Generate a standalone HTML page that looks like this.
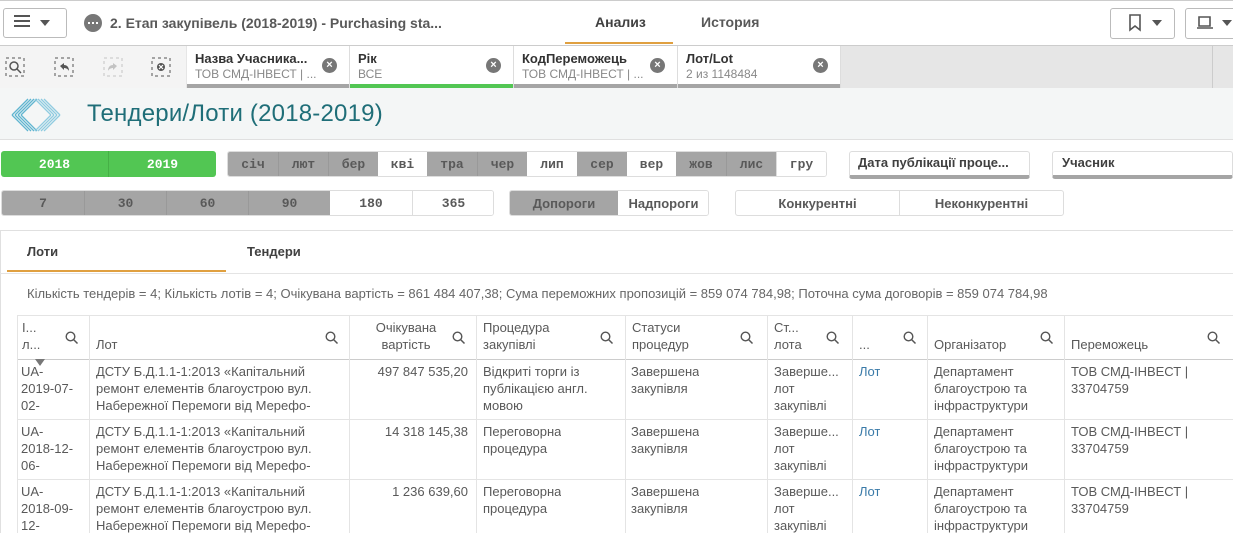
<!DOCTYPE html>
<html><head><meta charset="utf-8"><style>
*{box-sizing:border-box;margin:0;padding:0}
body{width:1233px;height:533px;overflow:hidden;background:#fff;font-family:"Liberation Sans","DejaVu Sans",sans-serif;color:#404040;position:relative}
.a{position:absolute}
.b{font-weight:bold}
.cell{position:absolute;display:flex;align-items:center;justify-content:center;font-size:13px;font-weight:bold;color:#595959;font-family:"Liberation Mono","DejaVu Sans Mono",monospace}
.g{background:#a5a5a5;color:#595959}
.w{background:#fff}
.sel{position:absolute;top:46px;height:42px;background:#fff;border-right:1px solid #ddd}
.sel .t{position:absolute;left:8px;top:5px;font-size:13px;font-weight:bold;color:#333}
.sel .s{position:absolute;left:8px;top:21px;font-size:12px;color:#888}
.sel .x{position:absolute;right:12px;top:12px;width:15px;height:15px;border-radius:50%;background:#777;color:#fff;font-size:11px;line-height:15px;text-align:center;font-weight:bold}
.sel .bar{position:absolute;left:0;right:0;bottom:0;height:4px;background:#a5a5a5}
.th{position:absolute;top:315px;height:44px;font-size:13px;color:#595959;line-height:17px;border-right:1px solid #e4e4e4}
.td{position:absolute;font-size:13px;color:#595959;line-height:17px;overflow:hidden}
.q{position:absolute;width:14px;height:14px}
.hl{position:absolute;left:17px;right:0;height:1px;background:#e4e4e4}
</style></head><body>
<!-- top bar -->
<div class="a" style="left:0;top:0;width:1233px;height:1px;background:#ccc"></div>
<div class="a" style="left:3px;top:8px;width:64px;height:30px;border:1px solid #bbb;border-radius:3px"></div>
<div class="a" style="left:14px;top:15px;width:16px;height:2px;background:#555;box-shadow:0 5px 0 #555,0 10px 0 #555"></div>
<div class="a" style="left:40px;top:20px;border-left:5px solid transparent;border-right:5px solid transparent;border-top:6px solid #555"></div>
<div class="a" style="left:84px;top:14px;width:18px;height:18px;border-radius:50%;background:#777"></div>
<div class="a" style="left:88px;top:22px;width:2px;height:2px;background:#fff;box-shadow:4px 0 0 #fff,8px 0 0 #fff"></div>
<div class="a b" style="left:110px;top:15px;font-size:14px;color:#595959">2. Етап закупівель (2018-2019) - Purchasing sta...</div>
<div class="a b" style="left:595px;top:14px;font-size:14px;color:#404040">Анализ</div>
<div class="a" style="left:565px;top:42px;width:108px;height:2px;background:#e0a040"></div>
<div class="a b" style="left:701px;top:14px;font-size:14px;color:#595959">История</div>
<div class="a" style="left:1110px;top:8px;width:65px;height:31px;border:1px solid #bbb;border-radius:3px"></div>
<svg class="a" style="left:1128px;top:14px" width="14" height="18"><path d="M2 1h10v15l-5-4-5 4z" fill="none" stroke="#555" stroke-width="1.6"/></svg>
<div class="a" style="left:1152px;top:20px;border-left:5px solid transparent;border-right:5px solid transparent;border-top:6px solid #555"></div>
<div class="a" style="left:1185px;top:8px;width:60px;height:31px;border:1px solid #bbb;border-radius:3px"></div>
<svg class="a" style="left:1196px;top:15px" width="18" height="16"><path d="M3 2h11v9H3z M1 13h16" fill="none" stroke="#555" stroke-width="1.6"/></svg>
<div class="a" style="left:1222px;top:20px;border-left:5px solid transparent;border-right:5px solid transparent;border-top:6px solid #555"></div>
<div class="a" style="left:0;top:45px;width:1233px;height:1px;background:#ccc"></div>
<!-- selection bar -->
<div class="a" style="left:0;top:46px;width:1233px;height:42px;background:#e6e6e6"></div>
<div class="a" style="left:0;top:46px;width:186px;height:42px;background:#f4f4f4"></div>
<div class="a" style="left:1212px;top:46px;width:1px;height:42px;background:#ccc"></div>
<svg class="a" style="left:5px;top:57px" width="20" height="20"><rect x="1" y="1" width="18" height="18" fill="none" stroke="#555" stroke-dasharray="3 3"/><circle cx="9" cy="9" r="4" fill="none" stroke="#555" stroke-width="1.5"/><path d="M12 12l4 4" stroke="#555" stroke-width="1.5"/></svg>
<svg class="a" style="left:54px;top:57px" width="20" height="20"><rect x="1" y="1" width="18" height="18" fill="none" stroke="#555" stroke-dasharray="3 3"/><path d="M6 9l4-3v2c3 0 5 2 5 6-1-2-3-3-5-3v2z" fill="#555"/></svg>
<svg class="a" style="left:103px;top:57px" width="20" height="20" opacity=".3"><rect x="1" y="1" width="18" height="18" fill="none" stroke="#555" stroke-dasharray="3 3"/><path d="M14 9l-4-3v2c-3 0-5 2-5 6 1-2 3-3 5-3v2z" fill="#555"/></svg>
<svg class="a" style="left:151px;top:57px" width="20" height="20"><rect x="1" y="1" width="18" height="18" fill="none" stroke="#555" stroke-dasharray="3 3"/><circle cx="10" cy="10" r="4" fill="#555"/><path d="M8 8l4 4M12 8l-4 4" stroke="#fff" stroke-width="1.2"/></svg>
<div class="sel" style="left:187px;width:163px"><div class="t">Назва Учасника...</div><div class="s">ТОВ СМД-ІНВЕСТ | ...</div><div class="x">×</div><div class="bar"></div></div>
<div class="sel" style="left:350px;width:164px"><div class="t">Рік</div><div class="s">ВСЕ</div><div class="x">×</div><div class="bar" style="background:#52c653"></div></div>
<div class="sel" style="left:514px;width:164px"><div class="t">КодПереможець</div><div class="s">ТОВ СМД-ІНВЕСТ | ...</div><div class="x">×</div><div class="bar"></div></div>
<div class="sel" style="left:678px;width:163px"><div class="t">Лот/Lot</div><div class="s">2 из 1148484</div><div class="x">×</div><div class="bar"></div></div>
<!-- header -->
<div class="a" style="left:0;top:88px;width:1233px;height:52px;background:#f4f6f6;border-bottom:1px solid #e0e0e0"></div>
<svg class="a" style="left:10px;top:97px" width="52" height="36"><g fill="none" stroke="#5fb5d0" stroke-width="1.3"><path d="M2 18L18 2M5 18L21 2M8 18L24 2M11 18L27 2"/><path d="M2 18L18 34M5 18L21 34M8 18L24 34M11 18L27 34"/><path d="M50 18L34 2M47 18L31 2M44 18L28 2M41 18L25 2" stroke="#8fcbe0"/><path d="M50 18L34 34M47 18L31 34M44 18L28 34M41 18L25 34" stroke="#8fcbe0"/></g></svg>
<div class="a" style="left:87px;top:100px;font-size:24px;color:#1f6e78;letter-spacing:0.2px">Тендери/Лоти (2018-2019)</div>
<!-- row1 -->
<div class="a" style="left:1px;top:151px;width:215px;height:26px;background:#52c653;border-radius:3px"></div>
<div class="cell" style="left:1px;top:151px;width:107px;height:26px;color:#fff">2018</div>
<div class="a" style="left:108px;top:151px;width:1px;height:26px;background:#46b046"></div>
<div class="cell" style="left:109px;top:151px;width:107px;height:26px;color:#fff">2019</div>
<div class="a" style="left:227px;top:151px;width:600px;height:26px;border:1px solid #ddd;border-radius:3px;overflow:hidden">
<div class="cell g" style="left:0;top:0;width:50px;height:24px">січ</div>
<div class="cell g" style="left:50px;top:0;width:50px;height:24px;border-left:1px solid #999">лют</div>
<div class="cell g" style="left:100px;top:0;width:50px;height:24px;border-left:1px solid #999">бер</div>
<div class="cell w" style="left:150px;top:0;width:49px;height:24px">кві</div>
<div class="cell g" style="left:199px;top:0;width:50px;height:24px">тра</div>
<div class="cell g" style="left:249px;top:0;width:50px;height:24px;border-left:1px solid #999">чер</div>
<div class="cell w" style="left:299px;top:0;width:50px;height:24px">лип</div>
<div class="cell g" style="left:349px;top:0;width:50px;height:24px">сер</div>
<div class="cell w" style="left:399px;top:0;width:49px;height:24px">вер</div>
<div class="cell g" style="left:448px;top:0;width:50px;height:24px">жов</div>
<div class="cell g" style="left:498px;top:0;width:50px;height:24px;border-left:1px solid #999">лис</div>
<div class="cell w" style="left:548px;top:0;width:50px;height:24px;border-left:1px solid #ddd">гру</div>
</div>
<div class="a" style="left:849px;top:151px;width:181px;height:28px;border:1px solid #ddd;border-bottom:4px solid #a5a5a5;border-radius:3px"></div>
<div class="a b" style="left:858px;top:155px;font-size:13px;color:#404040">Дата публікації проце...</div>
<div class="a" style="left:1052px;top:151px;width:181px;height:28px;border:1px solid #ddd;border-bottom:4px solid #a5a5a5;border-radius:3px"></div>
<div class="a b" style="left:1062px;top:155px;font-size:13px;color:#404040">Учасник</div>
<!-- row2 -->
<div class="a" style="left:1px;top:190px;width:493px;height:26px;border:1px solid #ddd;border-radius:3px;overflow:hidden">
<div class="cell g" style="left:0;top:0;width:82px;height:24px">7</div>
<div class="cell g" style="left:82px;top:0;width:82px;height:24px;border-left:1px solid #999">30</div>
<div class="cell g" style="left:164px;top:0;width:82px;height:24px;border-left:1px solid #999">60</div>
<div class="cell g" style="left:246px;top:0;width:82px;height:24px;border-left:1px solid #999">90</div>
<div class="cell w" style="left:328px;top:0;width:82px;height:24px">180</div>
<div class="cell w" style="left:410px;top:0;width:82px;height:24px;border-left:1px solid #ddd">365</div>
</div>
<div class="a" style="left:509px;top:190px;width:200px;height:26px;border:1px solid #ddd;border-radius:3px;overflow:hidden">
<div class="cell g" style="left:0;top:0;width:108px;height:24px;font-family:'Liberation Sans',sans-serif">Допороги</div>
<div class="cell w" style="left:108px;top:0;width:91px;height:24px;font-family:'Liberation Sans',sans-serif">Надпороги</div>
</div>
<div class="a" style="left:735px;top:190px;width:329px;height:26px;border:1px solid #ddd;border-radius:3px">
<div class="cell" style="left:0;top:0;width:164px;height:24px;font-family:'Liberation Sans',sans-serif;border-right:1px solid #ddd">Конкурентні</div>
<div class="cell" style="left:164px;top:0;width:163px;height:24px;font-family:'Liberation Sans',sans-serif">Неконкурентні</div>
</div>
<!-- tabs -->
<div class="a" style="left:0;top:230px;width:1233px;height:1px;background:#e0e0e0"></div>
<div class="a" style="left:0;top:230px;width:1px;height:303px;background:#e0e0e0"></div>
<div class="a b" style="left:27px;top:244px;font-size:13px;color:#404040">Лоти</div>
<div class="a b" style="left:247px;top:244px;font-size:13px;color:#404040">Тендери</div>
<div class="a" style="left:7px;top:270px;width:219px;height:2px;background:#e0a040"></div>
<div class="a" style="left:0;top:273px;width:1233px;height:1px;background:#e4e4e4"></div>
<div class="a" style="left:27px;top:286px;font-size:13px;color:#666">Кількість тендерів = 4; Кількість лотів = 4; Очікувана вартість = 861 484 407,38; Сума переможних пропозицій = 859 074 784,98; Поточна сума договорів = 859 074 784,98</div>
<!-- table -->
<div class="hl" style="top:315px"></div>
<div class="hl" style="top:359px;background:#ccc"></div>
<div class="hl" style="top:419px"></div>
<div class="hl" style="top:479px"></div>
<div class="a" style="left:17px;top:315px;width:1px;height:218px;background:#e4e4e4"></div>
<div class="th" style="left:18px;width:72px;padding:4px 4px">I...<br>л...</div>
<div class="th" style="left:90px;width:260px;padding:21px 6px 0">Лот</div>
<div class="th" style="left:350px;width:127px;padding:4px 0 0 12px;text-align:center;width:100px;border:none">Очікувана<br>вартість</div>
<div class="a" style="left:476px;top:315px;width:1px;height:218px;background:#e4e4e4"></div>
<div class="a" style="left:349px;top:315px;width:1px;height:218px;background:#e4e4e4"></div>
<div class="th" style="left:477px;width:149px;padding:4px 6px">Процедура<br>закупівлі</div>
<div class="th" style="left:626px;width:142px;padding:4px 6px">Статуси<br>процедур</div>
<div class="th" style="left:768px;width:85px;padding:4px 6px">Ст...<br>лота</div>
<div class="th" style="left:853px;width:75px;padding:21px 6px 0">...</div>
<div class="th" style="left:928px;width:137px;padding:21px 6px 0">Організатор</div>
<div class="th" style="left:1065px;width:168px;padding:21px 6px 0;border:none">Переможець</div>
<div class="a" style="left:89px;top:315px;width:1px;height:218px;background:#e4e4e4"></div>
<div class="a" style="left:625px;top:315px;width:1px;height:218px;background:#e4e4e4"></div>
<div class="a" style="left:767px;top:315px;width:1px;height:218px;background:#e4e4e4"></div>
<div class="a" style="left:852px;top:315px;width:1px;height:218px;background:#e4e4e4"></div>
<div class="a" style="left:927px;top:315px;width:1px;height:218px;background:#e4e4e4"></div>
<div class="a" style="left:1064px;top:315px;width:1px;height:218px;background:#e4e4e4"></div>
<svg class="q" style="left:65px;top:331px"><circle cx="5.5" cy="5.5" r="4.3" fill="none" stroke="#555" stroke-width="1.4"/><path d="M8.5 8.5l4 4" stroke="#555" stroke-width="1.5"/></svg>
<svg class="q" style="left:325px;top:331px"><circle cx="5.5" cy="5.5" r="4.3" fill="none" stroke="#555" stroke-width="1.4"/><path d="M8.5 8.5l4 4" stroke="#555" stroke-width="1.5"/></svg>
<svg class="q" style="left:452px;top:331px"><circle cx="5.5" cy="5.5" r="4.3" fill="none" stroke="#555" stroke-width="1.4"/><path d="M8.5 8.5l4 4" stroke="#555" stroke-width="1.5"/></svg>
<svg class="q" style="left:600px;top:331px"><circle cx="5.5" cy="5.5" r="4.3" fill="none" stroke="#555" stroke-width="1.4"/><path d="M8.5 8.5l4 4" stroke="#555" stroke-width="1.5"/></svg>
<svg class="q" style="left:740px;top:331px"><circle cx="5.5" cy="5.5" r="4.3" fill="none" stroke="#555" stroke-width="1.4"/><path d="M8.5 8.5l4 4" stroke="#555" stroke-width="1.5"/></svg>
<svg class="q" style="left:826px;top:331px"><circle cx="5.5" cy="5.5" r="4.3" fill="none" stroke="#555" stroke-width="1.4"/><path d="M8.5 8.5l4 4" stroke="#555" stroke-width="1.5"/></svg>
<svg class="q" style="left:903px;top:331px"><circle cx="5.5" cy="5.5" r="4.3" fill="none" stroke="#555" stroke-width="1.4"/><path d="M8.5 8.5l4 4" stroke="#555" stroke-width="1.5"/></svg>
<svg class="q" style="left:1040px;top:331px"><circle cx="5.5" cy="5.5" r="4.3" fill="none" stroke="#555" stroke-width="1.4"/><path d="M8.5 8.5l4 4" stroke="#555" stroke-width="1.5"/></svg>
<svg class="q" style="left:1207px;top:331px"><circle cx="5.5" cy="5.5" r="4.3" fill="none" stroke="#555" stroke-width="1.4"/><path d="M8.5 8.5l4 4" stroke="#555" stroke-width="1.5"/></svg>
<div class="a" style="left:35px;top:359px;border-left:5px solid transparent;border-right:5px solid transparent;border-top:7px solid #777"></div>

<div class="td" style="left:21px;top:363px;width:66px;height:53px">UA-<br>2019-07-<br>02-</div>
<div class="td" style="left:96px;top:363px;width:250px">ДСТУ Б.Д.1.1-1:2013 «Капітальний<br>ремонт елементів благоустрою вул.<br>Набережної Перемоги від Мерефо-</div>
<div class="td" style="left:352px;top:363px;width:116px;text-align:right">497 847 535,20</div>
<div class="td" style="left:483px;top:363px;width:140px">Відкриті торги із<br>публікацією англ.<br>мовою</div>
<div class="td" style="left:631px;top:363px">Завершена<br>закупівля</div>
<div class="td" style="left:774px;top:363px">Заверше...<br>лот<br>закупівлі</div>
<div class="td" style="left:859px;top:363px;color:#3a7aa8">Лот</div>
<div class="td" style="left:934px;top:363px">Департамент<br>благоустрою та<br>інфраструктури</div>
<div class="td" style="left:1071px;top:363px">ТОВ СМД-ІНВЕСТ |<br>33704759</div>

<div class="td" style="left:21px;top:423px;width:66px;height:53px">UA-<br>2018-12-<br>06-</div>
<div class="td" style="left:96px;top:423px;width:250px">ДСТУ Б.Д.1.1-1:2013 «Капітальний<br>ремонт елементів благоустрою вул.<br>Набережної Перемоги від Мерефо-</div>
<div class="td" style="left:352px;top:423px;width:116px;text-align:right">14 318 145,38</div>
<div class="td" style="left:483px;top:423px">Переговорна<br>процедура</div>
<div class="td" style="left:631px;top:423px">Завершена<br>закупівля</div>
<div class="td" style="left:774px;top:423px">Заверше...<br>лот<br>закупівлі</div>
<div class="td" style="left:859px;top:423px;color:#3a7aa8">Лот</div>
<div class="td" style="left:934px;top:423px">Департамент<br>благоустрою та<br>інфраструктури</div>
<div class="td" style="left:1071px;top:423px">ТОВ СМД-ІНВЕСТ |<br>33704759</div>

<div class="td" style="left:21px;top:483px;width:66px">UA-<br>2018-09-<br>12-</div>
<div class="td" style="left:96px;top:483px;width:250px">ДСТУ Б.Д.1.1-1:2013 «Капітальний<br>ремонт елементів благоустрою вул.<br>Набережної Перемоги від Мерефо-</div>
<div class="td" style="left:352px;top:483px;width:116px;text-align:right">1 236 639,60</div>
<div class="td" style="left:483px;top:483px">Переговорна<br>процедура</div>
<div class="td" style="left:631px;top:483px">Завершена<br>закупівля</div>
<div class="td" style="left:774px;top:483px">Заверше...<br>лот<br>закупівлі</div>
<div class="td" style="left:859px;top:483px;color:#3a7aa8">Лот</div>
<div class="td" style="left:934px;top:483px">Департамент<br>благоустрою та<br>інфраструктури</div>
<div class="td" style="left:1071px;top:483px">ТОВ СМД-ІНВЕСТ |<br>33704759</div>
</body></html>
